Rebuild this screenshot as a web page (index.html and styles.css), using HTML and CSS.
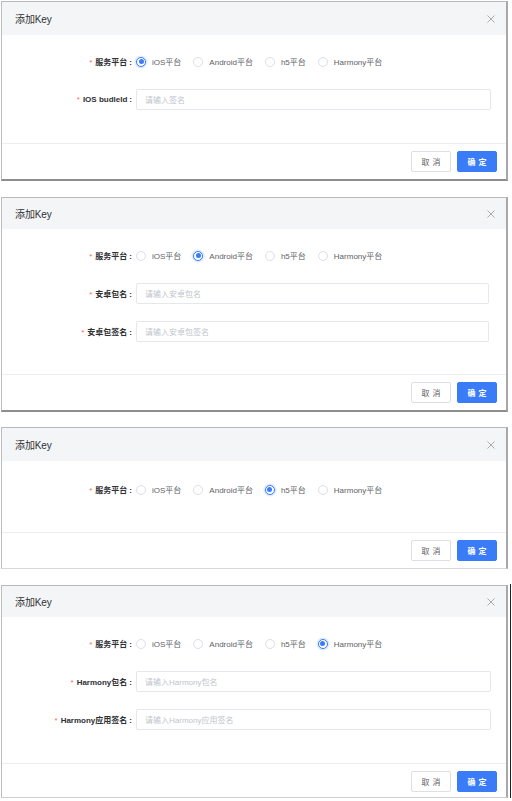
FILE: index.html
```html
<!DOCTYPE html>
<html lang="zh-CN">
<head>
<meta charset="utf-8">
<title>添加Key</title>
<link rel="stylesheet" href="styles.css">
</head>
<body>
<div class="page">

  <section class="dialog d1">
    <header class="dlg-head">
      <span class="dlg-title">添加Key</span>
      <svg class="close" viewBox="0 0 8 8" width="8" height="8"><path d="M0.5 0.5 L7.5 7.5 M7.5 0.5 L0.5 7.5" stroke="#a0a3aa" stroke-width="0.9" fill="none"/></svg>
    </header>
    <div class="dlg-body">
      <div class="row">
        <label class="lbl"><span class="star">*</span>服务平台<span class="colon">:</span></label>
        <div class="radios">
          <span class="radio on"><i class="dot"></i>iOS平台</span>
          <span class="radio"><i class="dot"></i>Android平台</span>
          <span class="radio"><i class="dot"></i>h5平台</span>
          <span class="radio"><i class="dot"></i>Harmony平台</span>
        </div>
      </div>
      <div class="row">
        <label class="lbl"><span class="star">*</span>IOS budleId<span class="colon">:</span></label>
        <div class="input"><span class="ph">请输入签名</span></div>
      </div>
    </div>
    <footer class="dlg-foot">
      <button class="btn">取消</button>
      <button class="btn primary">确定</button>
    </footer>
  </section>

  <section class="dialog d2">
    <header class="dlg-head">
      <span class="dlg-title">添加Key</span>
      <svg class="close" viewBox="0 0 8 8" width="8" height="8"><path d="M0.5 0.5 L7.5 7.5 M7.5 0.5 L0.5 7.5" stroke="#a0a3aa" stroke-width="0.9" fill="none"/></svg>
    </header>
    <div class="dlg-body">
      <div class="row">
        <label class="lbl"><span class="star">*</span>服务平台<span class="colon">:</span></label>
        <div class="radios">
          <span class="radio"><i class="dot"></i>iOS平台</span>
          <span class="radio on"><i class="dot"></i>Android平台</span>
          <span class="radio"><i class="dot"></i>h5平台</span>
          <span class="radio"><i class="dot"></i>Harmony平台</span>
        </div>
      </div>
      <div class="row">
        <label class="lbl"><span class="star">*</span>安卓包名<span class="colon">:</span></label>
        <div class="input narrow"><span class="ph">请输入安卓包名</span></div>
      </div>
      <div class="row">
        <label class="lbl"><span class="star">*</span>安卓包签名<span class="colon">:</span></label>
        <div class="input narrow"><span class="ph">请输入安卓包签名</span></div>
      </div>
    </div>
    <footer class="dlg-foot">
      <button class="btn">取消</button>
      <button class="btn primary">确定</button>
    </footer>
  </section>

  <section class="dialog d3">
    <header class="dlg-head">
      <span class="dlg-title">添加Key</span>
      <svg class="close" viewBox="0 0 8 8" width="8" height="8"><path d="M0.5 0.5 L7.5 7.5 M7.5 0.5 L0.5 7.5" stroke="#a0a3aa" stroke-width="0.9" fill="none"/></svg>
    </header>
    <div class="dlg-body">
      <div class="row">
        <label class="lbl"><span class="star">*</span>服务平台<span class="colon">:</span></label>
        <div class="radios">
          <span class="radio"><i class="dot"></i>iOS平台</span>
          <span class="radio"><i class="dot"></i>Android平台</span>
          <span class="radio on"><i class="dot"></i>h5平台</span>
          <span class="radio"><i class="dot"></i>Harmony平台</span>
        </div>
      </div>
    </div>
    <footer class="dlg-foot">
      <button class="btn">取消</button>
      <button class="btn primary">确定</button>
    </footer>
  </section>

  <section class="dialog d4">
    <header class="dlg-head">
      <span class="dlg-title">添加Key</span>
      <svg class="close" viewBox="0 0 8 8" width="8" height="8"><path d="M0.5 0.5 L7.5 7.5 M7.5 0.5 L0.5 7.5" stroke="#a0a3aa" stroke-width="0.9" fill="none"/></svg>
    </header>
    <div class="dlg-body">
      <div class="row">
        <label class="lbl"><span class="star">*</span>服务平台<span class="colon">:</span></label>
        <div class="radios">
          <span class="radio"><i class="dot"></i>iOS平台</span>
          <span class="radio"><i class="dot"></i>Android平台</span>
          <span class="radio"><i class="dot"></i>h5平台</span>
          <span class="radio on"><i class="dot"></i>Harmony平台</span>
        </div>
      </div>
      <div class="row">
        <label class="lbl"><span class="star">*</span>Harmony包名<span class="colon">:</span></label>
        <div class="input"><span class="ph">请输入Harmony包名</span></div>
      </div>
      <div class="row">
        <label class="lbl"><span class="star">*</span>Harmony应用签名<span class="colon">:</span></label>
        <div class="input"><span class="ph">请输入Harmony应用签名</span></div>
      </div>
    </div>
    <footer class="dlg-foot">
      <button class="btn">取消</button>
      <button class="btn primary">确定</button>
    </footer>
  </section>

</div>
</body>
</html>
```

FILE: styles.css
```css
* { box-sizing: border-box; }

html, body {
  margin: 0;
  padding: 0;
  background: #ffffff;
}

body {
  font-family: "Liberation Sans", "Noto Sans CJK SC", Arial, sans-serif;
  color: #606266;
  font-size: 8px;
}

.page {
  display: flex;
  flex-direction: column;
  padding-left: 1px;
}

.dialog {
  position: relative;
  width: 507px;
  background: #ffffff;
  border-top: 1px solid #b9b9b9;
  border-left: 1px solid #bdbdbd;
  border-right: 2px solid #a8a8a8;
  border-bottom: 2px solid #8e8e8e;
  display: flex;
  flex-direction: column;
}

.d1 { margin-top: 1px; }
.d2 { margin-top: 16px; }
.d3 { margin-top: 15px; border-bottom: 1px solid #d6d6d6; }
.d4 { margin-top: 16px; border-bottom: 1px solid #cfcfcf; }

.d4::after {
  content: "";
  position: absolute;
  top: -2px;
  bottom: -3px;
  right: -5px;
  width: 1.5px;
  background: #222;
}

.dlg-head {
  height: 33px;
  background: #f4f5f7;
  display: flex;
  align-items: center;
  justify-content: space-between;
  padding: 0 11px 0 13px;
}

.d2 .dlg-head, .d4 .dlg-head { height: 31px; }

.dlg-title {
  font-size: 10px;
  color: #303133;
  letter-spacing: -0.1px;
}

.close { display: block; }

.dlg-body {
  display: flex;
  flex-direction: column;
  gap: 17px;
  padding: 16px 15px 33px 0;
}

.d2 .dlg-body { padding-bottom: 32px; }
.d3 .dlg-body { padding-top: 18px; padding-bottom: 32px; }

.row {
  display: grid;
  grid-template-columns: 130px 1fr;
  column-gap: 4px;
  align-items: center;
  height: 21px;
}

.lbl {
  text-align: right;
  color: #303133;
  font-weight: 600;
  font-size: 8px;
  white-space: nowrap;
}

.star {
  color: #f56c6c;
  font-weight: 400;
  margin-right: 3px;
}

.colon {
  margin-left: 2px;
}

.radios {
  display: flex;
  align-items: center;
  gap: 12px;
}

.radio {
  display: flex;
  align-items: center;
  gap: 6px;
  color: #606266;
  white-space: nowrap;
}

.dot {
  width: 10px;
  height: 10px;
  border-radius: 50%;
  border: 1px solid #dcdfe6;
  background: #fff;
  display: flex;
  align-items: center;
  justify-content: center;
}

.radio.on .dot {
  border-color: #3a7cf8;
  box-shadow: 0 0 0 1.5px rgba(58, 124, 248, 0.16);
}

.radio.on .dot::after {
  content: "";
  width: 5px;
  height: 5px;
  border-radius: 50%;
  background: #3a7cf8;
}

.input {
  height: 21px;
  border: 1px solid #e4e7ed;
  border-radius: 2px;
  display: flex;
  align-items: center;
  padding-left: 8px;
}

.input.narrow { margin-right: 2px; }

.ph {
  color: #c0c4cc;
  font-size: 8px;
}

.dlg-foot {
  border-top: 1px solid #ebeef5;
  display: flex;
  justify-content: flex-end;
  gap: 6px;
  padding: 7px 9px 7px 0;
}

.d4 .dlg-foot { padding-bottom: 5px; }

.btn {
  width: 40px;
  height: 21px;
  border: 1px solid #dcdfe6;
  border-radius: 2px;
  background: #fff;
  color: #606266;
  font-family: inherit;
  font-size: 8px;
  letter-spacing: 3px;
  padding: 0 0 0 3px;
  display: flex;
  align-items: center;
  justify-content: center;
}

.btn.primary {
  background: #3a7cf8;
  border-color: #3a7cf8;
  color: #fff;
  font-weight: 600;
}
```
